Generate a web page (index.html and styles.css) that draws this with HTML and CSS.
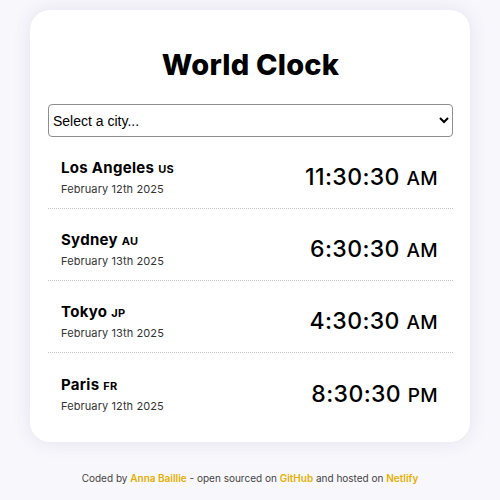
FILE: index.html
```html
<!DOCTYPE html>
<html lang="en">
<head>
<meta charset="utf-8">
<title>World Clock</title>
<link rel="stylesheet" href="styles.css">
</head>
<body>
<div class="card">
  <h1 class="title">World Clock</h1>
  <select class="city-select">
    <option>Select a city...</option>
  </select>
  <div class="cities">
    <div class="city">
      <div class="city-info">
        <div class="city-name">Los Angeles <span class="country">US</span></div>
        <div class="city-date">February 12th 2025</div>
      </div>
      <div class="city-time">11:30:30 <span class="ampm">AM</span></div>
    </div>
    <div class="city">
      <div class="city-info">
        <div class="city-name">Sydney <span class="country">AU</span></div>
        <div class="city-date">February 13th 2025</div>
      </div>
      <div class="city-time">6:30:30 <span class="ampm">AM</span></div>
    </div>
    <div class="city">
      <div class="city-info">
        <div class="city-name">Tokyo <span class="country">JP</span></div>
        <div class="city-date">February 13th 2025</div>
      </div>
      <div class="city-time">4:30:30 <span class="ampm">AM</span></div>
    </div>
    <div class="city last">
      <div class="city-info">
        <div class="city-name">Paris <span class="country">FR</span></div>
        <div class="city-date">February 12th 2025</div>
      </div>
      <div class="city-time">8:30:30 <span class="ampm">PM</span></div>
    </div>
  </div>
</div>
<footer class="footer">
  Coded by <a href="#">Anna Baillie</a> - open sourced on <a href="#">GitHub</a> and hosted on <a href="#">Netlify</a>
</footer>
</body>
</html>
```

FILE: styles.css
```css
* { box-sizing: border-box; }
body {
  margin: 0;
  background: #f8f7fc;
  font-family: "Inter", "Open Sans", sans-serif;
  color: #000;
}
.card {
  width: 440px;
  margin: 10px auto 0;
  padding: 17px 17px 17px 18px;
  background: #fff;
  border-radius: 20px;
  box-shadow: 0 0 18px rgba(80, 70, 140, 0.12);
}
.title {
  margin: 20px 0 21px;
  text-align: center;
  font-size: 29px;
  line-height: 36px;
  font-weight: 800;
  letter-spacing: 0.2px;
}
.city-select {
  display: block;
  width: 100%;
  height: 33px;
  font-family: Arial, "Liberation Sans", sans-serif;
  font-size: 14px;
  color: #000;
  background: #fff;
  border: 1px solid #8f8f8f;
  border-radius: 4px;
}
.city {
  height: 72px;
  padding: 9px 15px 0 13px;
  display: flex;
  align-items: center;
  justify-content: space-between;
  border-bottom: 1px dotted #c4c4c4;
}
.city.last { border-bottom: none; }
.city-name {
  font-size: 15px;
  font-weight: 700;
  line-height: 20px;
  letter-spacing: 0.3px;
}
.country {
  font-size: 11px;
}
.city-date {
  margin-top: 3px;
  font-size: 11px;
  color: #333;
  letter-spacing: 0.1px;
}
.city-time {
  font-size: 23px;
  font-weight: 500;
  letter-spacing: 0.4px;
}
.ampm {
  font-size: 19px;
}
.footer {
  margin-top: 30px;
  text-align: center;
  font-size: 10px;
  color: #444;
}
.footer a {
  color: #e6b000;
  font-weight: 600;
  text-decoration: none;
}
```
